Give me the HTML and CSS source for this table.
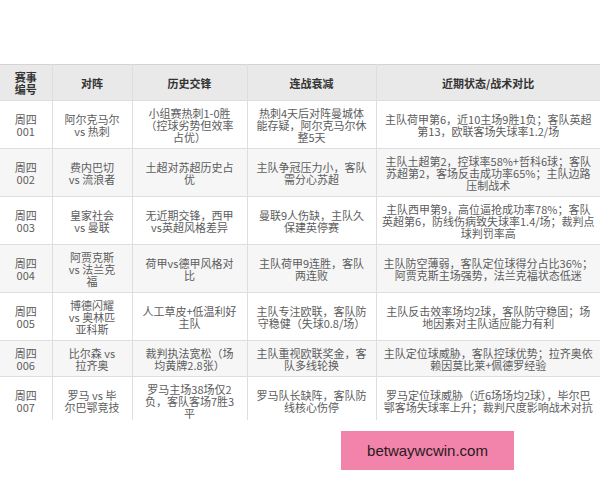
FILE: index.html
```html
<!DOCTYPE html>
<html lang="zh-CN">
<head>
<meta charset="utf-8">
<title>赛事对比</title>
<link rel="stylesheet" href="styles.css">
</head>
<body>
<div class="page">
  <div class="table-wrap">
    <table class="matches">
      <colgroup>
        <col class="c1"><col class="c2"><col class="c3"><col class="c4"><col class="c5">
      </colgroup>
      <thead>
        <tr>
          <th>赛事<br>编号</th>
          <th>对阵</th>
          <th>历史交锋</th>
          <th>连战衰减</th>
          <th>近期状态/战术对比</th>
        </tr>
      </thead>
      <tbody>
        <tr>
          <td>周四<br>001</td>
          <td>阿尔克马尔<br>vs 热刺</td>
          <td>小组赛热刺1-0胜<br>（控球劣势但效率<br>占优）</td>
          <td>热刺4天后对阵曼城体<br>能存疑，阿尔克马尔休<br>整5天</td>
          <td>主队荷甲第6，近10主场9胜1负；客队英超<br>第13，欧联客场失球率1.2/场</td>
        </tr>
        <tr>
          <td>周四<br>002</td>
          <td>费内巴切<br>vs 流浪者</td>
          <td>土超对苏超历史占<br>优</td>
          <td>主队争冠压力小，客队<br>需分心苏超</td>
          <td>主队土超第2，控球率58%+哲科6球；客队<br>苏超第2，客场反击成功率65%；主队边路<br>压制战术</td>
        </tr>
        <tr>
          <td>周四<br>003</td>
          <td>皇家社会<br>vs 曼联</td>
          <td>无近期交锋，西甲<br>vs英超风格差异</td>
          <td>曼联9人伤缺，主队久<br>保建英停赛</td>
          <td>主队西甲第9，高位逼抢成功率78%；客队<br>英超第6，防线伤病致失球率1.4/场；裁判点<br>球判罚率高</td>
        </tr>
        <tr>
          <td>周四<br>004</td>
          <td>阿贾克斯<br>vs 法兰克<br>福</td>
          <td>荷甲vs德甲风格对<br>比</td>
          <td>主队荷甲9连胜，客队<br>两连败</td>
          <td>主队防空薄弱，客队定位球得分占比36%；<br>阿贾克斯主场强势，法兰克福状态低迷</td>
        </tr>
        <tr>
          <td>周四<br>005</td>
          <td>博德闪耀<br>vs 奥林匹<br>亚科斯</td>
          <td>人工草皮+低温利好<br>主队</td>
          <td>主队专注欧联，客队防<br>守稳健（失球0.8/场）</td>
          <td>主队反击效率场均2球，客队防守稳固；场<br>地因素对主队适应能力有利</td>
        </tr>
        <tr>
          <td>周四<br>006</td>
          <td>比尔森 vs<br>拉齐奥</td>
          <td>裁判执法宽松（场<br>均黄牌2.8张）</td>
          <td>主队重视欧联奖金，客<br>队多线轮换</td>
          <td>主队定位球威胁，客队控球优势；拉齐奥依<br>赖因莫比莱+佩德罗经验</td>
        </tr>
        <tr>
          <td>周四<br>007</td>
          <td>罗马 vs 毕<br>尔巴鄂竞技</td>
          <td>罗马主场38场仅2<br>负，客队客场7胜3<br>平</td>
          <td>罗马队长缺阵，客队防<br>线核心伤停</td>
          <td>罗马定位球威胁（近6场场均2球），毕尔巴<br>鄂客场失球率上升；裁判尺度影响战术对抗</td>
        </tr>
      </tbody>
    </table>
  </div>
  <div class="footer">
    <div class="brand">betwaywcwin.com</div>
  </div>
</div>
</body>
</html>
```

FILE: styles.css
```css
html, body {
  margin: 0;
  padding: 0;
  background: #ffffff;
}

.page {
  width: 600px;
  height: 480px;
  overflow: hidden;
  padding-top: 64px;
  box-sizing: border-box;
  font-family: "Noto Sans CJK SC", "Liberation Sans", sans-serif;
}

.table-wrap {
  height: 356px;
  overflow: hidden;
}

.matches {
  width: 600px;
  table-layout: fixed;
  border-collapse: collapse;
  font-size: 11px;
  line-height: 12px;
}

.c1 { width: 52px; }
.c2 { width: 80px; }
.c3 { width: 115px; }
.c4 { width: 129px; }
.c5 { width: 224px; }

.matches th,
.matches td {
  text-align: center;
  vertical-align: middle;
  white-space: nowrap;
  border: 1px solid #dedede;
  padding: 0 2px;
}

.matches th {
  height: 35px;
  background: #e9e9e9;
  color: #333333;
  font-weight: bold;
  border-top-color: #d4d4d4;
}

.matches td {
  color: #5c5c5c;
  padding-top: 6px;
  padding-bottom: 5px;
}

.matches tbody tr:nth-child(even) td {
  background: #f6f6f6;
}

.matches tr > :first-child {
  border-left: none;
}

.matches tr > :last-child {
  border-right: none;
}

.footer {
  display: flex;
  padding-top: 11px;
  padding-left: 341px;
}

.brand {
  width: 173px;
  height: 39px;
  background: #f283aa;
  color: #2a1a22;
  font-family: "Liberation Sans", Arial, sans-serif;
  font-size: 15px;
  display: flex;
  align-items: center;
  justify-content: center;
}
```
